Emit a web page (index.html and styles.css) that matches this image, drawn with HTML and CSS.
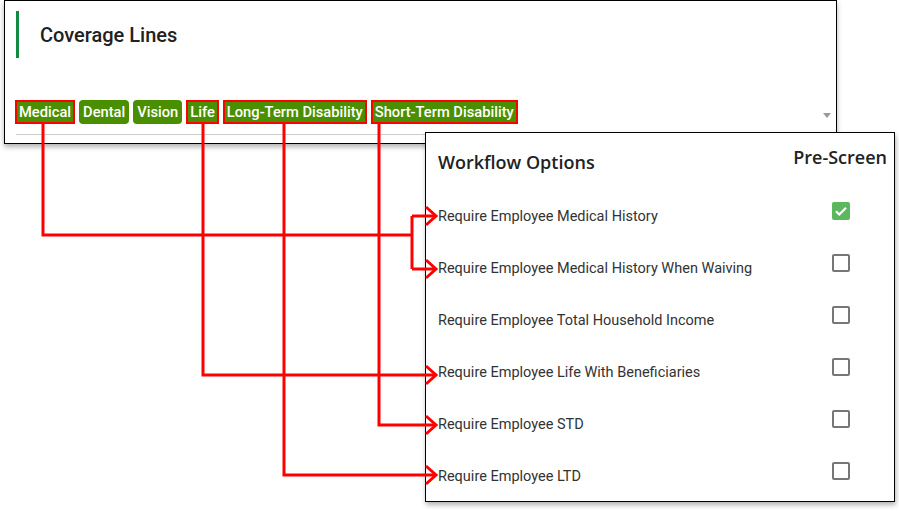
FILE: index.html
```html
<!DOCTYPE html>
<html lang="en">
<head>
    <meta charset="utf-8" />
    <title>Coverage Lines - Workflow Options</title>
    <link rel="stylesheet" href="styles.css">
</head>
<body>
<div class="page">

    <section class="coverage">
        <h3 class="coverage-title">Coverage Lines</h3>
        <div class="chip-select">
            <span class="chip marked">Medical</span>
            <span class="chip">Dental</span>
            <span class="chip">Vision</span>
            <span class="chip marked">Life</span>
            <span class="chip marked">Long-Term Disability</span>
            <span class="chip marked">Short-Term Disability</span>
            <span class="caret"></span>
        </div>
        <div class="divider"></div>
    </section>

    <section class="workflow">
        <div class="workflow-head">
            <h3 class="workflow-title">Workflow Options</h3>
            <span class="col-title">Pre-Screen</span>
        </div>
        <div class="option">
            <span class="option-label">Require Employee Medical History</span>
            <span class="option-cell"><span class="checkbox checked">
                <svg viewBox="0 0 18 18" width="18" height="18"><path d="M4 9.2l3.3 3.3L14 5.8" fill="none" stroke="#fff" stroke-width="2.2"/></svg>
            </span></span>
        </div>
        <div class="option">
            <span class="option-label">Require Employee Medical History When Waiving</span>
            <span class="option-cell"><span class="checkbox"></span></span>
        </div>
        <div class="option">
            <span class="option-label">Require Employee Total Household Income</span>
            <span class="option-cell"><span class="checkbox"></span></span>
        </div>
        <div class="option">
            <span class="option-label">Require Employee Life With Beneficiaries</span>
            <span class="option-cell"><span class="checkbox"></span></span>
        </div>
        <div class="option">
            <span class="option-label">Require Employee STD</span>
            <span class="option-cell"><span class="checkbox"></span></span>
        </div>
        <div class="option">
            <span class="option-label">Require Employee LTD</span>
            <span class="option-cell"><span class="checkbox"></span></span>
        </div>
    </section>

    <!-- callouts: coverage line -> workflow option -->
    <svg class="callouts" width="899" height="511" viewBox="0 0 899 511">
        <g fill="none" stroke="#f00" stroke-width="3">
            <!-- medical -->
            <polyline points="43,124 43,235 412,235"/>
            <polyline points="412,216 412,269"/>
            <line x1="412" y1="216" x2="435" y2="216"/>
            <line x1="412" y1="269" x2="435" y2="269"/>
            <!-- life -->
            <polyline points="203,124 203,375 435,375"/>
            <!-- short-term -->
            <polyline points="379,124 379,425 435,425"/>
            <!-- long-term -->
            <polyline points="284,124 284,475 435,475"/>
            <!-- arrow heads -->
            <polyline points="426,207 436,216 426,225"/>
            <polyline points="426,260 436,269 426,278"/>
            <polyline points="426,366 436,375 426,384"/>
            <polyline points="426,416 436,425 426,434"/>
            <polyline points="426,466 436,475 426,484"/>
        </g>
    </svg>
</div>
</body>
</html>
```

FILE: styles.css
```css
body {
    margin: 0;
    background: #fff;
    font-family: Roboto, "Liberation Sans", sans-serif;
    color: #222;
}

.page {
    position: relative;
    width: 899px;
    height: 511px;
    overflow: hidden;
}

/* coverage lines card */
.coverage {
    box-sizing: border-box;
    width: 833px;
    height: 144px;
    margin-left: 4px;
    padding: 10px 5px 0 11px;
    border: 1px solid #000;
    background: #fff;
    box-shadow: 0 3px 5px rgba(0,0,0,0.3);
}
.coverage-title {
    display: flex;
    align-items: center;
    height: 47px;
    margin: 0;
    padding-left: 21px;
    border-left: 3px solid #138a43;
    font-size: 20px;
    font-weight: 500;
    color: #212121;
}
.chip-select {
    display: flex;
    align-items: center;
    gap: 4px;
    margin: 42px 0 0 -1px;
}
.chip {
    height: 24px;
    padding: 0 4px;
    line-height: 24px;
    font-size: 14.7px;
    font-weight: 500;
    color: #fff;
    background: #4a8f00;
    border-radius: 4px;
    white-space: nowrap;
}
.chip.marked {
    border-radius: 0;
    box-shadow: inset 0 0 0 2px #f00;
}
.caret {
    margin: 6px 0 0 auto;
    border-left: 4.5px solid transparent;
    border-right: 4.5px solid transparent;
    border-top: 5px solid #999;
}
.divider {
    height: 1px;
    margin-top: 10px;
    background: #ccc;
}

/* workflow options panel */
.workflow {
    position: absolute;
    left: 425px;
    top: 132px;
    box-sizing: border-box;
    width: 470px;
    height: 370px;
    padding: 0 7px 0 12px;
    border: 1px solid #000;
    background: #fff;
    box-shadow: 1px 3px 5px rgba(0,0,0,0.3);
}
.workflow-head {
    display: flex;
    justify-content: space-between;
    align-items: flex-start;
    height: 56px;
    box-sizing: border-box;
    padding-top: 12px;
    font-family: "Open Sans", sans-serif;
    font-size: 18px;
    line-height: 24px;
    font-weight: 600;
    color: #222;
}
.workflow-title {
    margin: 5px 0 0;
    font-size: 18px;
    font-weight: 600;
}
.option {
    display: flex;
    align-items: center;
    height: 52px;
    padding-top: 3px;
    box-sizing: border-box;
}
.option-label {
    flex: 1;
    font-size: 14.5px;
    color: #333;
}
.option-cell {
    display: flex;
    justify-content: center;
    width: 93px;
    margin-bottom: 12px;
}
.checkbox {
    box-sizing: border-box;
    width: 18px;
    height: 18px;
    border: 2px solid #777;
    border-radius: 2px;
}
.checkbox.checked {
    border: 0;
    background: #5cb85c;
}
.checkbox svg {
    display: block;
}

.callouts {
    position: absolute;
    top: 0;
    left: 0;
    pointer-events: none;
}
```
